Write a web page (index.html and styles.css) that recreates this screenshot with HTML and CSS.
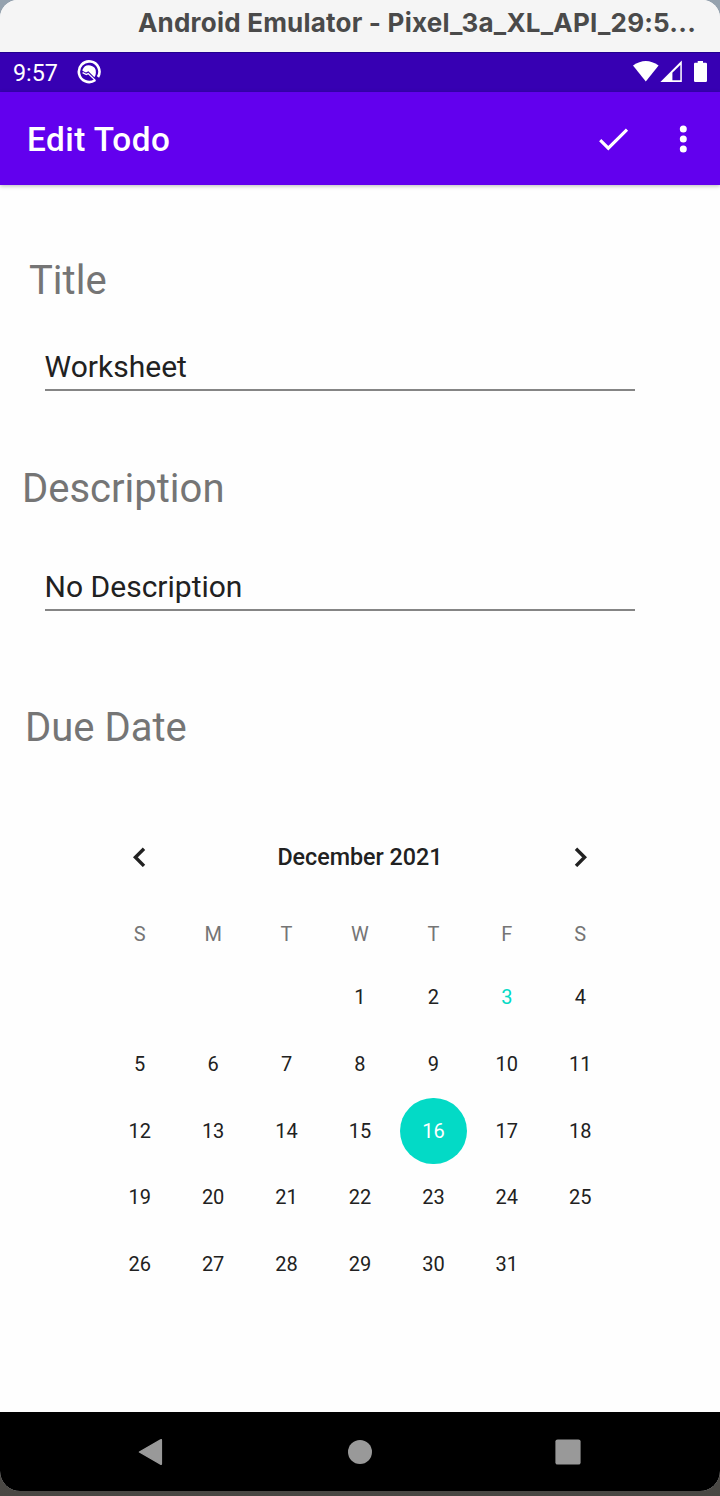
FILE: index.html
```html
<!DOCTYPE html>
<html lang="en">
<head>
<meta charset="utf-8">
<title>Edit Todo</title>
<link rel="stylesheet" href="styles.css">
</head>
<body>
<div class="window">
  <div class="titlebar">Android Emulator - Pixel_3a_XL_API_29:5...</div>
  <div class="statusbar">
    <span class="clock">9:57</span>
    <svg class="notif" width="24" height="24" viewBox="0 0 24 24">
      <path d="M18 20.2A10.3 10.3 0 1 1 21 17" fill="none" stroke="#fff" stroke-width="2.6"/>
      <path d="M5.6 9.6A6.9 6.9 0 0 1 18.9 12.4Q18.9 15.4 17.4 17.2L11.4 11.3L9 12.6L5.4 10.8Z" fill="#fff"/>
      <path d="M5.6 12.6L9.3 14.6L11.2 13.6L18.6 20.6" fill="none" stroke="#fff" stroke-width="1.3"/>
    </svg>
    <svg class="sys" width="76" height="24" viewBox="0 0 76 24">
      <path d="M0 5.6Q12.8-3.4 25.6 5.6L12.8 21.4Z" fill="#fff"/>
      <path d="M27.4 21.9L48.8 .6V21.9Z" fill="#fff"/>
      <path d="M39.4 12.7L47.3 5V20.3H39.4Z" fill="#3700b3"/>
      <path d="M62 2.7H64.7V1.1H70V2.7H72.8Q74 2.7 74 3.9V20.7Q74 22 72.8 22H62.2Q61 22 61 20.7V3.9Q61 2.7 62 2.7Z" fill="#fff"/>
    </svg>
  </div>
  <header class="appbar">
    <h1 class="appbar-title">Edit Todo</h1>
    <svg class="check" width="30" height="24" viewBox="0 0 30 24"><path d="M1.2 13.2L9.3 21.2L28 2.6" fill="none" stroke="#fff" stroke-width="3.1"/></svg>
    <svg class="more" width="8" height="28" viewBox="0 0 8 28"><g fill="#fff"><circle cx="4.3" cy="4" r="3.5"/><circle cx="4.3" cy="14" r="3.5"/><circle cx="4.3" cy="24" r="3.5"/></g></svg>
  </header>
  <main class="form">
    <div class="label label-title">Title</div>
    <div class="field field-title">Worksheet</div>
    <div class="label label-desc">Description</div>
    <div class="field field-desc">No Description</div>
    <div class="label label-due">Due Date</div>
    <section class="calendar">
      <div class="month">
        <svg class="arrow" width="14" height="20" viewBox="0 0 14 20"><path d="M12 1.7L3.4 10.3L12 18.9" fill="none" stroke="#212121" stroke-width="3.4"/></svg>
        <span class="month-name">December 2021</span>
        <svg class="arrow" width="14" height="20" viewBox="0 0 14 20"><path d="M2 1.7L10.6 10.3L2 18.9" fill="none" stroke="#212121" stroke-width="3.4"/></svg>
      </div>
      <div class="week weekdays"><span>S</span><span>M</span><span>T</span><span>W</span><span>T</span><span>F</span><span>S</span></div>
      <div class="week"><span></span><span></span><span></span><span>1</span><span>2</span><span class="today">3</span><span>4</span></div>
      <div class="week"><span>5</span><span>6</span><span>7</span><span>8</span><span>9</span><span>10</span><span>11</span></div>
      <div class="week"><span>12</span><span>13</span><span>14</span><span>15</span><span class="selected">16</span><span>17</span><span>18</span></div>
      <div class="week"><span>19</span><span>20</span><span>21</span><span>22</span><span>23</span><span>24</span><span>25</span></div>
      <div class="week"><span>26</span><span>27</span><span>28</span><span>29</span><span>30</span><span>31</span><span></span></div>
    </section>
  </main>
  <nav class="navbar">
    <svg width="26" height="28" viewBox="0 0 26 28"><path d="M1.4 14L22.6 1.8Q23.4 1.2 23.4 2.4V25.6Q23.4 26.8 22.6 26.2Z" fill="#999" stroke="#999" stroke-width="1.4" stroke-linejoin="round"/></svg>
    <svg width="26" height="28" viewBox="0 0 26 28"><circle cx="13" cy="14" r="12" fill="#999"/></svg>
    <svg width="26" height="28" viewBox="0 0 26 28"><rect x=".4" y="1.4" width="25.2" height="25.2" rx="2.2" fill="#999"/></svg>
  </nav>
</div>
</body>
</html>
```

FILE: styles.css
```css
* { box-sizing: border-box; }

body {
  margin: 0;
  width: 720px;
  height: 1496px;
  overflow: hidden;
  background: linear-gradient(#95a2ae 0, #95a2ae 60px, #55514d 1400px, #494743 1496px);
  font-family: Roboto, "Noto Sans", sans-serif;
}

.window {
  display: flex;
  flex-direction: column;
  height: 1491px;
  border-radius: 18px 18px 20px 20px;
  overflow: hidden;
  background: #fefefe;
}

.titlebar {
  height: 52px;
  padding: 0 0 7px 138px;
  background: #f5f5f5;
  color: #4a4a4a;
  font: 700 26px/45px Inter, "Liberation Sans", sans-serif;
  letter-spacing: .21px;
  white-space: nowrap;
}

.statusbar {
  display: flex;
  align-items: center;
  height: 40px;
  padding: 0 11px 0 13px;
  background: #3700b3;
  border-top: 1px solid #220090;
  color: #fff;
}

.clock { width: 64px; font-size: 23.3px; line-height: 40px; }
.notif { position: relative; top: -1px; }
.sys { margin-left: auto; position: relative; top: -1px; }

.appbar {
  display: flex;
  align-items: center;
  flex: none;
  height: 93px;
  padding: 0 33px 0 27px;
  background: #6200ee;
  box-shadow: 0 1px 4px rgba(0, 0, 0, .28);
  color: #fff;
}

.appbar-title { margin: 3px auto 0 0; font-size: 33.3px; font-weight: 500; line-height: 40px; letter-spacing: .5px; }
.check { margin-right: 50px; }

.form { flex: 1; padding-top: 72px; }

.label { color: #757575; font-size: 40px; line-height: 48px; }
.label-title { padding-left: 29px; }
.label-desc { padding-left: 22px; margin-top: 74px; }
.label-due { padding-left: 25px; margin-top: 93px; }

.field {
  width: 590px;
  height: 42px;
  margin-left: 44.6px;
  border-bottom: 2px solid #858585;
  color: #212121;
  font-size: 30px;
  line-height: 36px;
}
.field-title { margin-top: 43.5px; }
.field-desc { margin-top: 56px; }

.calendar { width: 514px; margin: 72px 0 0 103px; }

.month {
  display: flex;
  align-items: center;
  justify-content: space-between;
  height: 67.7px;
  padding: 0 29px;
  color: #212121;
}
.month-name { font-size: 23.3px; font-weight: 500; }

.week {
  display: grid;
  grid-template-columns: repeat(7, 1fr);
  justify-items: center;
  height: 66.67px;
  color: #212121;
  font-size: 20px;
  line-height: 66.67px;
}
.week span { width: 66.67px; text-align: center; }
.weekdays { height: 73px; line-height: 86px; color: #757575; }
.today { color: #03dac6; }
.week .selected { border-radius: 50%; background: #03dac6; color: #fff; }

.navbar {
  display: flex;
  align-items: center;
  justify-content: space-between;
  flex: none;
  height: 79px;
  padding: 0 139px 0 138px;
  background: #000;
}
```
